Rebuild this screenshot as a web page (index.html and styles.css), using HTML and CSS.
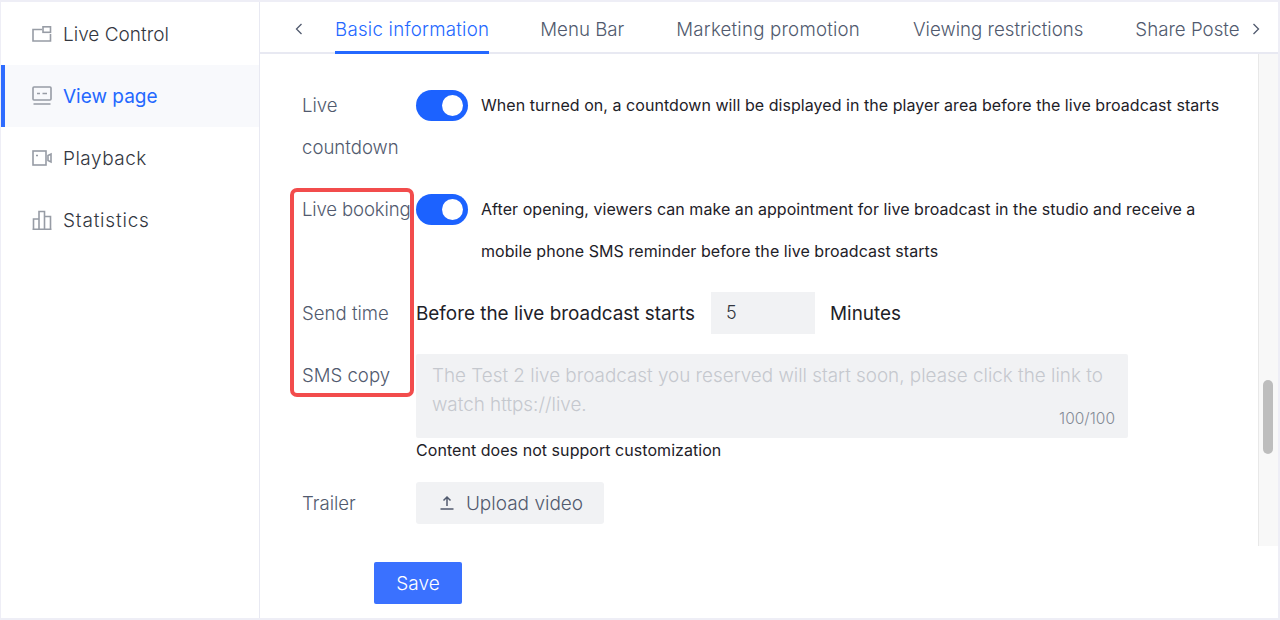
FILE: index.html
```html
<!DOCTYPE html>
<html lang="en">
<head>
<meta charset="utf-8">
<title>View page</title>
<link rel="stylesheet" href="styles.css">
</head>
<body>
<div class="app">
  <nav class="side">
    <a class="nav-item">
      <svg class="nav-icon" viewBox="0 0 20 16"><path d="M10 3.500H1V15H18.500V8" /><rect x="11" y="0.800" width="7.500" height="5.500"/></svg>
      <span>Live Control</span>
    </a>
    <a class="nav-item active">
      <svg class="nav-icon" viewBox="0 0 20 20"><rect x="1" y="1" width="18" height="13" rx="1"/><path d="M5 7.500H8M10.500 7.500H15M1.500 18H18.500"/></svg>
      <span>View page</span>
    </a>
    <a class="nav-item">
      <svg class="nav-icon" viewBox="0 0 20 16"><rect x="1" y="1" width="13" height="14"/><path d="M19 4V12L16 10.500V5.500Z"/><path d="M4 5.500H6" /></svg>
      <span class="spaced-s">Playback</span>
    </a>
    <a class="nav-item">
      <svg class="nav-icon" viewBox="0 0 20 20"><path d="M0.500 19.200H19.500M1.500 19.200V9H7V19.200M7 19.200V1.500H12.500V19.200M12.500 6.500H18.500V19.200"/></svg>
      <span class="spaced-m">Statistics</span>
    </a>
  </nav>
  <main class="main">
    <div class="tabs">
      <svg class="chev chev-left" viewBox="0 0 8 12"><path d="M6.500 1L1.500 6L6.500 11"/></svg>
      <span class="tab current">Basic information</span>
      <span class="tab">Menu Bar</span>
      <span class="tab tab-long">Marketing promotion</span>
      <span class="tab">Viewing restrictions</span>
      <span class="tab tab-cut">Share Poste</span>
      <svg class="chev chev-right" viewBox="0 0 8 12"><path d="M1.500 1L6.500 6L1.500 11"/></svg>
    </div>
    <div class="body">
      <div class="form">
        <div class="row">
          <div class="label">Live countdown</div>
          <div class="toggle"><span class="knob"></span></div>
          <p class="hint">When turned on, a countdown will be displayed in the player area before the live broadcast starts</p>
        </div>
        <div class="row">
          <div class="label label-tight">Live booking</div>
          <div class="toggle"><span class="knob"></span></div>
          <p class="hint">After opening, viewers can make an appointment for live broadcast in the studio and receive a mobile phone SMS reminder before the live broadcast starts</p>
        </div>
        <div class="row">
          <div class="label">Send time</div>
          <span class="plain">Before the live broadcast starts</span>
          <div class="num">5</div>
          <span class="plain">Minutes</span>
        </div>
        <div class="row">
          <div class="label">SMS copy</div>
          <div class="sms-col">
            <div class="sms">
              <div class="sms-text">
                <span class="sms-line">The Test 2 live broadcast you reserved will start soon, please click the link to</span>
                <span class="sms-line">watch https://live.</span>
              </div>
              <span class="count">100/100</span>
            </div>
            <p class="note">Content does not support customization</p>
          </div>
        </div>
        <div class="row">
          <div class="label">Trailer</div>
          <div class="upload">
            <svg class="up-icon" viewBox="0 0 16 16"><path d="M8 11V2M4.500 5.500L8 2L11.500 5.500M1.500 14H14.500"/></svg>
            <span>Upload video</span>
          </div>
        </div>
        <div class="highlight"></div>
      </div>
      <div class="scroll"><div class="thumb"></div></div>
    </div>
    <div class="foot"><button class="save">Save</button></div>
  </main>
</div>
</body>
</html>
```
FILE: styles.css
```css
* { box-sizing: border-box; }
html, body { margin: 0; height: 100%; }
body { background: #eeeef6; padding: 2px 2px 2px 1px; font-family: Inter, "Open Sans", sans-serif; font-weight: 300; }
.app { display: flex; height: 616px; background: #fff; }
.side { width: 259px; flex: none; border-right: 1px solid #e8e9f2; padding-top: 1px; }
.nav-item { display: flex; align-items: center; height: 62px; padding-left: 31px; font-size: 19px; color: #33373f; }
.nav-item.active { background: #f8f9fc; border-left: 4px solid #2f6cff; padding-left: 27px; color: #2468ff; font-weight: 400; }
.spaced-s { letter-spacing: 0.500px; }
.spaced-m { letter-spacing: 0.800px; }
.nav-icon { width: 20px; height: 20px; margin-right: 11px; fill: none; stroke: #979ca5; stroke-width: 1.600; }
.main { flex: 1; display: flex; flex-direction: column; min-width: 0; }
.tabs { display: flex; align-items: stretch; height: 52px; flex: none; box-shadow: inset 0 -2px 0 #e8e9f2; position: relative; padding-left: 75px; gap: 52px; white-space: nowrap; overflow: hidden; }
.tab { font-size: 18.700px; line-height: 56px; height: 52px; color: #515a6e; }
.tab.current { color: #2468ff; border-bottom: 3px solid #2468ff; letter-spacing: 0.250px; margin-right: -1px; }
.tab-long { letter-spacing: 0.200px; margin-right: 1px; }
.tab-cut { width: 107px; overflow: hidden; }
.chev { position: absolute; top: 21px; width: 8px; height: 12px; fill: none; stroke: #515a6e; stroke-width: 1.300; }
.chev-left { left: 35px; }
.chev-right { left: 992px; }
.body { display: flex; height: 492px; flex: none; }
.form { flex: 1; position: relative; padding: 30px 0 0 42px; min-width: 0; }
.row { display: flex; align-items: flex-start; margin-bottom: 20px; }
.label { width: 114px; flex: none; font-size: 18.600px; line-height: 42px; color: #515a6e; }
.label-tight { letter-spacing: -0.150px; }
.toggle { width: 52px; height: 31px; flex: none; margin: 6px 13px 0 0; border-radius: 16px; background: #1c62ff; display: flex; justify-content: flex-end; align-items: center; padding-right: 5px; }
.knob { width: 21px; height: 21px; border-radius: 50%; background: #fff; }
.hint { margin: 0; width: 745px; font-size: 16px; line-height: 42px; color: #1e2128; font-weight: 400; letter-spacing: 0.050px; }
.plain { font-size: 18.900px; line-height: 42px; margin: 1px 0 -1px; color: #1e2128; font-weight: 400; }
.num { width: 104px; height: 42px; margin: 0 15px 0 16px; padding-left: 15px; background: #f1f2f4; font-size: 18px; line-height: 42px; color: #33373f; }
.sms-col { width: 712px; }
.sms { height: 84px; background: #f1f2f4; border-radius: 2px; padding: 7px 13px 0 16px; display: flex; flex-direction: column; }
.sms-text { height: 47px; font-size: 18.850px; line-height: 29px; color: #c5c8ce; }
.sms-line { display: block; white-space: nowrap; }
.count { align-self: flex-end; font-size: 15.500px; line-height: 21px; color: #858b96; }
.note { margin: 0; font-size: 16px; line-height: 24px; color: #1e2128; font-weight: 400; letter-spacing: 0.050px; }
.upload { width: 188px; height: 42px; padding-left: 2px; background: #f1f2f4; border-radius: 3px; display: flex; align-items: center; justify-content: center; gap: 11px; font-size: 19px; color: #515a6e; }
.up-icon { width: 16px; height: 16px; fill: none; stroke: #515a6e; stroke-width: 1.500; }
.highlight { position: absolute; left: 30px; top: 134px; width: 124px; height: 209px; border: 4px solid #f24c4c; border-radius: 7px; }
.scroll { width: 20px; flex: none; background: #f8f8f8; border-left: 1px solid #e8e8e8; padding: 326px 4px 0 4px; }
.thumb { width: 10px; height: 74px; background: #bdbdbd; border-radius: 5px; }
.foot { flex: 1; padding: 16px 0 0 114px; }
.save { display: block; width: 88px; height: 42px; padding: 0; background: #3a71ff; border: 0; border-radius: 2px; color: #fff; font-family: inherit; font-weight: 300; font-size: 19px; }
```
